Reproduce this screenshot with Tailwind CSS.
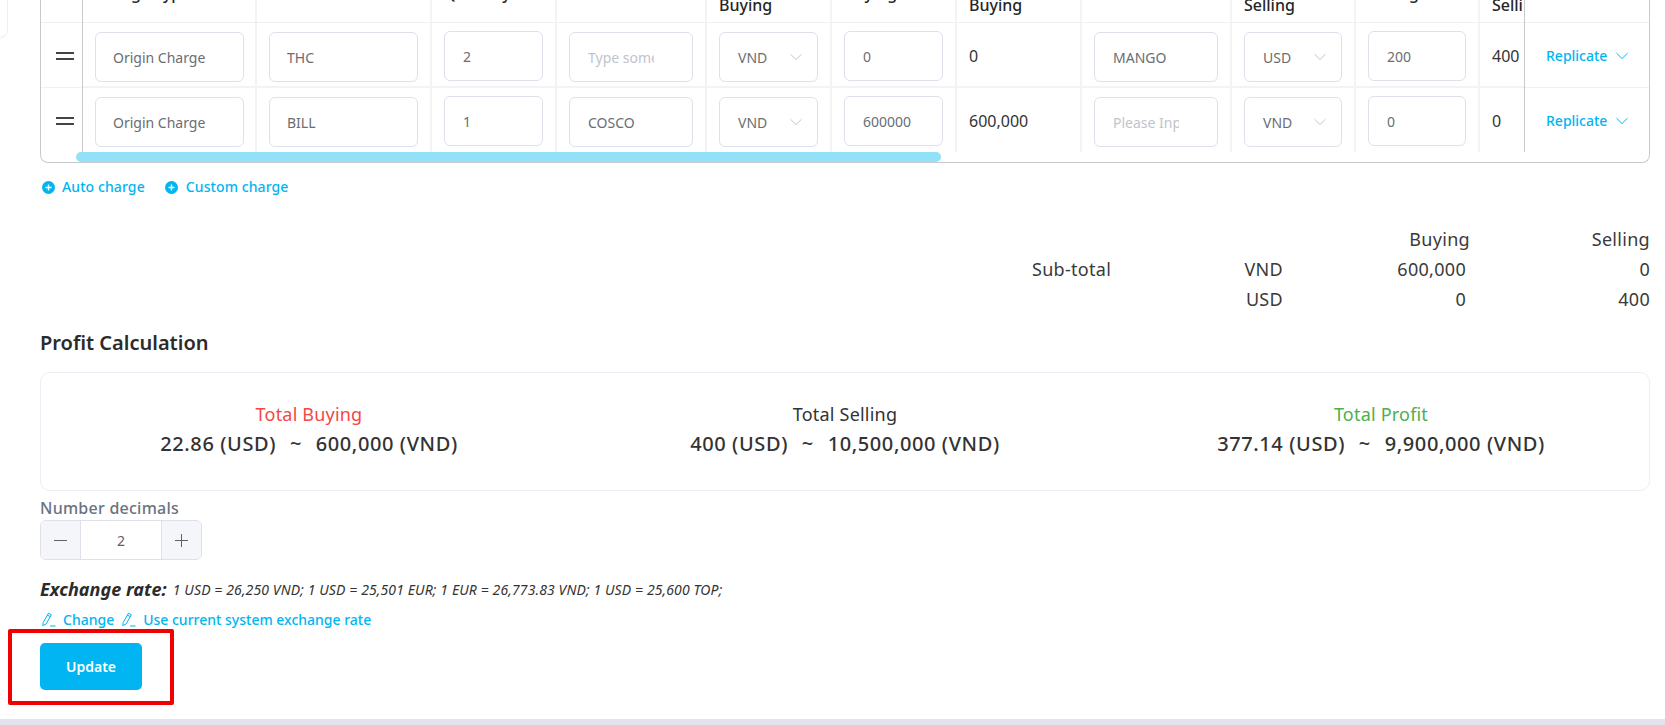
<!DOCTYPE html>
<html lang="en">
<head>
  <meta charset="UTF-8" />
  <title>Charges</title>
  <script src="https://cdn.jsdelivr.net/npm/@tailwindcss/browser@4"></script>
</head>
<body class="relative h-[725px] overflow-hidden bg-white font-['Noto_Sans',sans-serif] text-[#333]">
  <!-- corner of the card above, scrolled away -->
  <div class="absolute left-0 top-0 h-[38px] w-[8px] rounded-br-lg border-r border-b border-[#eeeef2]"></div>

  <main class="h-[719px] pl-[40px] pr-[15px]">
    <!-- Charges table -->
    <div class="relative flex h-[163px] overflow-hidden rounded-b-lg border-x border-b border-[#c9c9cd]">
      <!-- Handle column -->
      <div class="w-[42px] shrink-0 border-r border-[#c9c9cd]">
        <div class="h-[23px] border-b border-[#f0f0f2]"></div>
        <div class="flex h-[65px] items-start border-b border-[#f0f0f2] pl-[15px] pt-[29px]">
          <div class="h-[8px] w-[18px] border-y-2 border-[#444]"></div>
        </div>
        <div class="flex h-[64px] items-start pl-[15px] pt-[29px]">
          <div class="h-[8px] w-[18px] border-y-2 border-[#444]"></div>
        </div>
      </div>

      <!-- Scrolling columns -->
      <div class="h-[152px] min-w-0 flex-1 overflow-hidden">
        <div class="w-[1500px]">
          <!-- Header, scrolled partly out of view -->
          <div class="grid h-[23px] grid-cols-[174px_175px_125px_150px_125px_125px_125px_150px_124px_124px_60px] grid-rows-[22px] overflow-hidden border-b border-[#f0f0f2] text-[16px] font-medium leading-[22px] text-[#262626]">
            <div class="flex items-end whitespace-nowrap border-r-2 border-[#f3f3f6] pb-[18px] pl-[12px]">Charge Type</div>
            <div class="flex items-end whitespace-nowrap border-r-2 border-[#f3f3f6] pb-[18px] pl-[12px]">Name</div>
            <div class="flex items-end whitespace-nowrap border-r-2 border-[#f3f3f6] pb-[18px] pl-[12px]">Quantity</div>
            <div class="flex items-end whitespace-nowrap border-r-2 border-[#f3f3f6] pb-[18px] pl-[12px]">Vendor</div>
            <div class="flex items-end whitespace-nowrap border-r-2 border-[#f3f3f6] pb-[6px] pl-[12px]">Buying</div>
            <div class="flex items-end whitespace-nowrap border-r-2 border-[#f3f3f6] pb-[18px] pl-[12px]">Buying</div>
            <div class="flex items-end whitespace-nowrap border-r-2 border-[#f3f3f6] pb-[6px] pl-[12px]">Buying</div>
            <div class="flex items-end whitespace-nowrap border-r-2 border-[#f3f3f6] pb-[18px] pl-[12px]">Vendor</div>
            <div class="flex items-end whitespace-nowrap border-r-2 border-[#f3f3f6] pb-[6px] pl-[12px]">Selling</div>
            <div class="flex items-end whitespace-nowrap border-r-2 border-[#f3f3f6] pb-[18px] pl-[12px]">Selling</div>
            <div class="flex items-end whitespace-nowrap pb-[6px] pl-[12px]">Selling</div>
          </div>

          <!-- Row: THC -->
          <div class="grid h-[65px] grid-cols-[174px_175px_125px_150px_125px_125px_125px_150px_124px_124px_60px] border-b-2 border-[#f3f3f6] text-[14px] text-[#6b6d71]">
            <div class="border-r-2 border-[#f3f3f6] pl-[12px] pr-[11px] pt-[9px]"><input readonly value="Origin Charge" class="h-[50px] w-full rounded-md border border-[#dfe0e9] pl-[17px] pr-[20px] outline-none" /></div>
            <div class="border-r-2 border-[#f3f3f6] px-3 pt-[9px]"><input readonly value="THC" class="h-[50px] w-full rounded-md border border-[#dfe0e9] pl-[17px] pr-[20px] outline-none" /></div>
            <div class="border-r-2 border-[#f3f3f6] px-3 pt-[8px]"><input readonly value="2" class="h-[50px] w-full rounded-md border border-[#dfe0e9] pl-[18px] pr-[10px] outline-none" /></div>
            <div class="border-r-2 border-[#f3f3f6] px-3 pt-[9px]"><input readonly placeholder="Type something" class="h-[50px] w-full rounded-md border border-[#dfe0e9] pl-[18px] pr-[38px] outline-none placeholder:text-[#c0c4cc]" /></div>
            <div class="border-r-2 border-[#f3f3f6] px-3 pt-[9px]">
              <div class="flex h-[50px] items-center justify-between rounded-md border border-[#dfe0e9] pl-[18px] pr-[15px]">VND
                <svg class="h-[8px] w-[12px]" viewBox="0 0 12 8" fill="none" stroke="#c0c4cc"><path d="M.5 1.2 6 6.6l5.5-5.4" /></svg>
              </div>
            </div>
            <div class="border-r-2 border-[#f3f3f6] px-3 pt-[8px]"><input readonly value="0" class="h-[50px] w-full rounded-md border border-[#dfe0e9] pl-[18px] pr-[10px] outline-none" /></div>
            <div class="border-r-2 border-[#f3f3f6] pl-3 pt-[22px] text-[16px] leading-[22px] text-[#333]">0</div>
            <div class="border-r-2 border-[#f3f3f6] px-3 pt-[9px]"><input readonly value="MANGO" class="h-[50px] w-full rounded-md border border-[#dfe0e9] pl-[18px] pr-[20px] outline-none" /></div>
            <div class="border-r-2 border-[#f3f3f6] px-3 pt-[9px]">
              <div class="flex h-[50px] items-center justify-between rounded-md border border-[#dfe0e9] pl-[18px] pr-[15px]">USD
                <svg class="h-[8px] w-[12px]" viewBox="0 0 12 8" fill="none" stroke="#c0c4cc"><path d="M.5 1.2 6 6.6l5.5-5.4" /></svg>
              </div>
            </div>
            <div class="border-r-2 border-[#f3f3f6] px-3 pt-[8px]"><input readonly value="200" class="h-[50px] w-full rounded-md border border-[#dfe0e9] pl-[18px] pr-[10px] outline-none" /></div>
            <div class="pl-[12px] pt-[22px] text-[16px] leading-[22px] text-[#333]">400</div>
          </div>

          <!-- Row: BILL -->
          <div class="grid h-[64px] grid-cols-[174px_175px_125px_150px_125px_125px_125px_150px_124px_124px_60px] text-[14px] text-[#6b6d71]">
            <div class="border-r-2 border-[#f3f3f6] pl-[12px] pr-[11px] pt-[9px]"><input readonly value="Origin Charge" class="h-[50px] w-full rounded-md border border-[#dfe0e9] pl-[17px] pr-[20px] outline-none" /></div>
            <div class="border-r-2 border-[#f3f3f6] px-3 pt-[9px]"><input readonly value="BILL" class="h-[50px] w-full rounded-md border border-[#dfe0e9] pl-[17px] pr-[20px] outline-none" /></div>
            <div class="border-r-2 border-[#f3f3f6] px-3 pt-[8px]"><input readonly value="1" class="h-[50px] w-full rounded-md border border-[#dfe0e9] pl-[18px] pr-[10px] outline-none" /></div>
            <div class="border-r-2 border-[#f3f3f6] px-3 pt-[9px]"><input readonly value="COSCO" class="h-[50px] w-full rounded-md border border-[#dfe0e9] pl-[18px] pr-[38px] outline-none" /></div>
            <div class="border-r-2 border-[#f3f3f6] px-3 pt-[9px]">
              <div class="flex h-[50px] items-center justify-between rounded-md border border-[#dfe0e9] pl-[18px] pr-[15px]">VND
                <svg class="h-[8px] w-[12px]" viewBox="0 0 12 8" fill="none" stroke="#c0c4cc"><path d="M.5 1.2 6 6.6l5.5-5.4" /></svg>
              </div>
            </div>
            <div class="border-r-2 border-[#f3f3f6] px-3 pt-[8px]"><input readonly value="600000" class="h-[50px] w-full rounded-md border border-[#dfe0e9] pl-[18px] pr-[10px] outline-none" /></div>
            <div class="border-r-2 border-[#f3f3f6] pl-3 pt-[22px] text-[16px] leading-[22px] text-[#333]">600,000</div>
            <div class="border-r-2 border-[#f3f3f6] px-3 pt-[9px]"><input readonly placeholder="Please Input" class="h-[50px] w-full rounded-md border border-[#dfe0e9] pl-[18px] pr-[38px] outline-none placeholder:text-[#c0c4cc]" /></div>
            <div class="border-r-2 border-[#f3f3f6] px-3 pt-[9px]">
              <div class="flex h-[50px] items-center justify-between rounded-md border border-[#dfe0e9] pl-[18px] pr-[15px]">VND
                <svg class="h-[8px] w-[12px]" viewBox="0 0 12 8" fill="none" stroke="#c0c4cc"><path d="M.5 1.2 6 6.6l5.5-5.4" /></svg>
              </div>
            </div>
            <div class="border-r-2 border-[#f3f3f6] px-3 pt-[8px]"><input readonly value="0" class="h-[50px] w-full rounded-md border border-[#dfe0e9] pl-[18px] pr-[10px] outline-none" /></div>
            <div class="pl-[12px] pt-[22px] text-[16px] leading-[22px] text-[#333]">0</div>
          </div>
        </div>
      </div>

      <!-- Fixed actions column -->
      <div class="h-[152px] w-[125px] shrink-0 border-l border-[#c9c9cd] text-[14px] font-medium text-[#00b5f1]">
        <div class="h-[23px] border-b border-[#f0f0f2]"></div>
        <div class="flex h-[65px] items-center border-b border-[#f0f0f2] pl-[21px] pt-[1px]">Replicate
          <svg class="ml-[9px] h-[8px] w-[12px]" viewBox="0 0 12 8" fill="none" stroke="#00b5f1"><path d="M.5 1.2 6 6.6l5.5-5.4" /></svg>
        </div>
        <div class="flex h-[64px] items-center pl-[21px] pt-[1px]">Replicate
          <svg class="ml-[9px] h-[8px] w-[12px]" viewBox="0 0 12 8" fill="none" stroke="#00b5f1"><path d="M.5 1.2 6 6.6l5.5-5.4" /></svg>
        </div>
      </div>

      <!-- Scrollbar thumb -->
      <div class="absolute bottom-0 left-[35px] h-[10px] w-[865px] rounded-full bg-[#93e0f9]"></div>
    </div>

    <!-- Add charge links -->
    <div class="mt-[14px] flex h-[20px] items-center pl-[2px] text-[14px] font-medium leading-[20px] tracking-[0.1px] text-[#00b5f1]">
      <svg class="h-[13px] w-[13px]" viewBox="0 0 13 13"><circle cx="6.5" cy="6.5" r="6.5" fill="#00b5f1" /><path d="M3.5 6.5h6M6.5 3.5v6" stroke="#fff" stroke-width="1.4" /></svg>
      <span class="ml-[7px]">Auto charge</span>
      <svg class="ml-[20px] h-[13px] w-[13px]" viewBox="0 0 13 13"><circle cx="6.5" cy="6.5" r="6.5" fill="#00b5f1" /><path d="M3.5 6.5h6M6.5 3.5v6" stroke="#fff" stroke-width="1.4" /></svg>
      <span class="ml-[8px]">Custom charge</span>
    </div>

    <!-- Sub-total -->
    <div class="ml-auto mt-[27px] grid w-[618px] grid-cols-[251px_187px_180px] text-[18px] leading-[30px] tracking-[0.3px] text-[#3a3a3a]">
      <div></div>
      <div class="text-right">Buying</div>
      <div class="text-right">Selling</div>
      <div class="flex justify-between"><span>Sub-total</span><span>VND</span></div>
      <div class="pr-[4px] text-right">600,000</div>
      <div class="text-right">0</div>
      <div class="text-right">USD</div>
      <div class="pr-[4px] text-right">0</div>
      <div class="text-right">400</div>
    </div>

    <h2 class="mt-[15px] text-[20px] font-semibold leading-[28px] text-[#2b2b2b]">Profit Calculation</h2>

    <!-- Profit card -->
    <div class="mt-[15px] grid h-[119px] grid-cols-3 rounded-[10px] border border-[#eceef5] pt-[26px] text-center leading-[30px]">
      <div>
        <div class="text-[18px] tracking-[0.2px] text-[#f44747]">Total Buying</div>
        <div class="text-[20px] font-medium tracking-[0.6px] text-[#333]">22.86 (USD) <span class="mx-[8px]">~</span> 600,000 (VND)</div>
      </div>
      <div>
        <div class="text-[18px] tracking-[0.2px] text-[#333]">Total Selling</div>
        <div class="text-[20px] font-medium tracking-[0.6px] text-[#333]">400 (USD) <span class="mx-[8px]">~</span> 10,500,000 (VND)</div>
      </div>
      <div>
        <div class="text-[18px] tracking-[0.2px] text-[#4caf50]">Total Profit</div>
        <div class="text-[20px] font-medium tracking-[0.6px] text-[#333]">377.14 (USD) <span class="mx-[8px]">~</span> 9,900,000 (VND)</div>
      </div>
    </div>

    <!-- Number decimals -->
    <div class="mt-[5px] text-[16px] font-medium leading-[24px] tracking-[0.25px] text-[#6b7280]">Number decimals</div>
    <div class="flex h-[40px] w-[162px] overflow-hidden rounded-md border border-[#dfe0e9] text-[#606266]">
      <div class="flex w-[40px] items-center justify-center border-r border-[#dfe0e9] bg-[#f5f6fa]">
        <svg class="h-[13px] w-[13px]" viewBox="0 0 13 13" stroke="#606266"><path d="M0 6.5h13" /></svg>
      </div>
      <div class="flex flex-1 items-center justify-center pt-[1px] text-[14px]">2</div>
      <div class="flex w-[40px] items-center justify-center border-l border-[#dfe0e9] bg-[#f5f6fa]">
        <svg class="h-[13px] w-[13px]" viewBox="0 0 13 13" stroke="#606266"><path d="M0 6.5h13M6.5 0v13" /></svg>
      </div>
    </div>

    <!-- Exchange rate -->
    <div class="mt-[16px] flex h-[26px] items-center italic text-[#333]">
      <span class="text-[18px] font-bold tracking-[0.05px] text-[#2b2b2b]">Exchange rate:</span>
      <span class="ml-[6px] text-[14px] tracking-[0.12px]">1 USD = 26,250 VND; 1 USD = 25,501 EUR; 1 EUR = 26,773.83 VND; 1 USD = 25,600 TOP;</span>
    </div>
    <div class="mt-[7px] flex h-[20px] items-center pl-[2px] text-[14px] font-medium text-[#00b5f1]">
      <svg class="h-[15px] w-[14px]" viewBox="0 0 14 15" fill="none" stroke="#00b5f1"><path d="M1.2 10.5 6.5 1.2l2.8 1.6L4 12.1l-3.2 1.6zM5.4 3l2.8 1.7M8 14h5.5" /></svg>
      <span class="ml-[7px]">Change</span>
      <svg class="ml-[8px] h-[15px] w-[14px]" viewBox="0 0 14 15" fill="none" stroke="#00b5f1"><path d="M1.2 10.5 6.5 1.2l2.8 1.6L4 12.1l-3.2 1.6zM5.4 3l2.8 1.7M8 14h5.5" /></svg>
      <span class="ml-[7px]">Use current system exchange rate</span>
    </div>

    <button class="mt-[14px] h-[47px] w-[102px] rounded-[5px] bg-[#00b5f1] text-[14px] font-semibold text-white">Update</button>
  </main>

  <footer class="h-[6px] bg-[#e3e3ed]"></footer>

  <!-- Red annotation around the button -->
  <div class="absolute left-[8px] top-[629px] h-[76px] w-[166px] rounded-[2px] border-[4px] border-[#f00000]"></div>
</body>
</html>
